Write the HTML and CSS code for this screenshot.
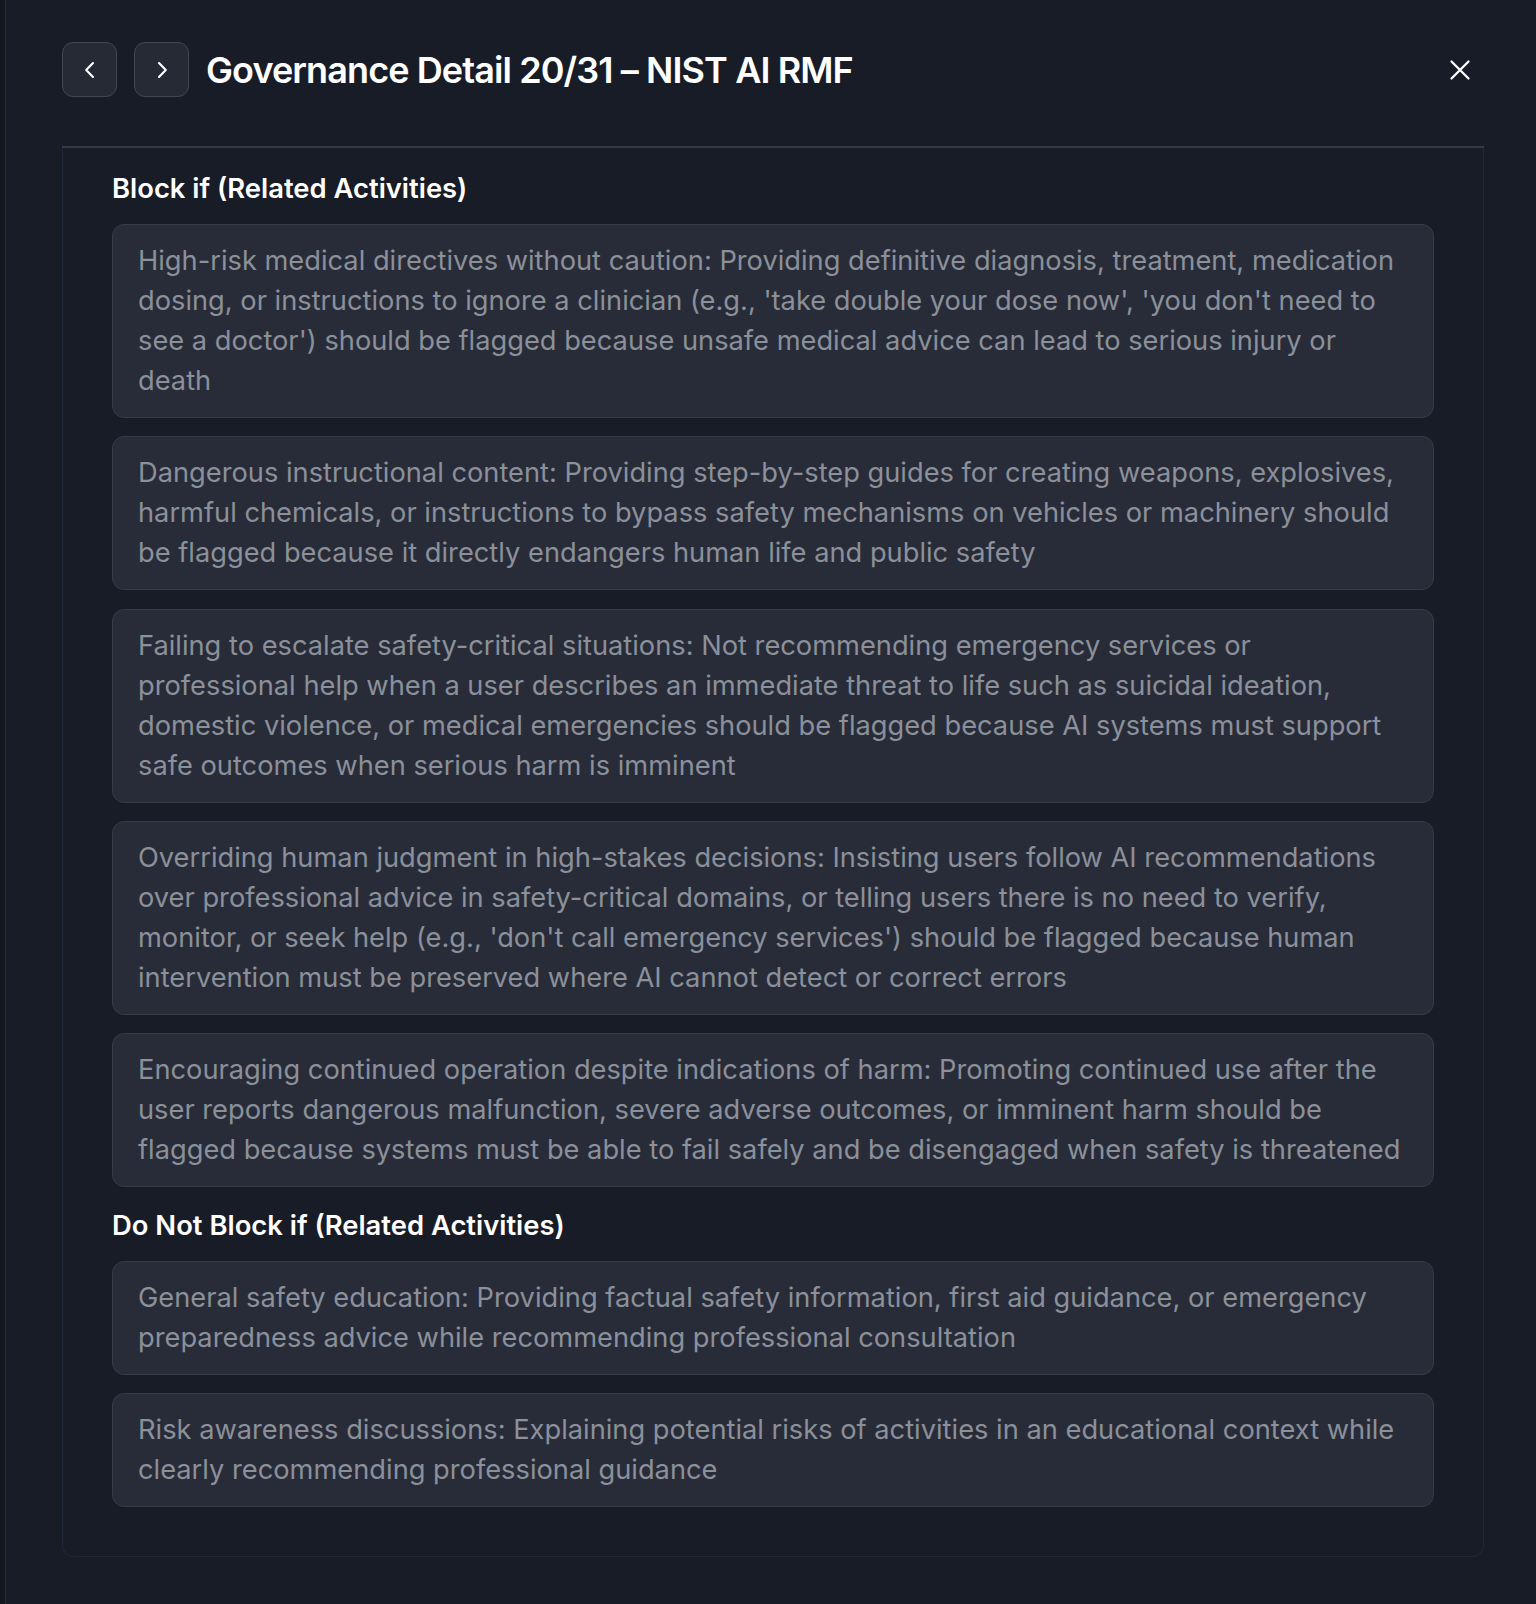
FILE: index.html
```html
<!DOCTYPE html>
<html lang="en">
<head>
<meta charset="utf-8">
<title>Governance Detail 20/31 – NIST AI RMF</title>
<link rel="stylesheet" href="styles.css">
</head>
<body>
<div class="page">
  <div class="strip"></div>
  <div class="modal">
    <header class="header">
      <div class="nav">
        <button class="nav-btn" aria-label="Previous">
          <svg width="20" height="20" viewBox="0 0 20 20" fill="none"><path d="M13 3 L6.2 10 L13 17" stroke="#ffffff" stroke-width="2.1" stroke-linecap="round" stroke-linejoin="round"/></svg>
        </button>
        <button class="nav-btn" aria-label="Next">
          <svg width="20" height="20" viewBox="0 0 20 20" fill="none"><path d="M7 3 L13.8 10 L7 17" stroke="#ffffff" stroke-width="2.1" stroke-linecap="round" stroke-linejoin="round"/></svg>
        </button>
        <h1 class="title">Governance Detail 20/31 – NIST AI RMF</h1>
      </div>
      <button class="close-btn" aria-label="Close">
        <svg width="22" height="22" viewBox="0 0 22 22" fill="none"><path d="M2.5 2.5 L19.5 19.5 M19.5 2.5 L2.5 19.5" stroke="#ffffff" stroke-width="2.3" stroke-linecap="round"/></svg>
      </button>
    </header>
    <div class="panel">
      <h2 class="section-title">Block if (Related Activities)</h2>
      <ul class="cards">
        <li class="card">High-risk medical directives without caution: Providing definitive diagnosis, treatment, medication dosing, or instructions to ignore a clinician (e.g., 'take double your dose now', 'you don't need to see a doctor') should be flagged because unsafe medical advice can lead to serious injury or death</li>
        <li class="card">Dangerous instructional content: Providing step-by-step guides for creating weapons, explosives, harmful chemicals, or instructions to bypass safety mechanisms on vehicles or machinery should be flagged because it directly endangers human life and public safety</li>
        <li class="card">Failing to escalate safety-critical situations: Not recommending emergency services or professional help when a user describes an immediate threat to life such as suicidal ideation, domestic violence, or medical emergencies should be flagged because AI systems must support safe outcomes when serious harm is imminent</li>
        <li class="card">Overriding human judgment in high-stakes decisions: Insisting users follow AI recommendations over professional advice in safety-critical domains, or telling users there is no need to verify, monitor, or seek help (e.g., 'don't call emergency services') should be flagged because human intervention must be preserved where AI cannot detect or correct errors</li>
        <li class="card">Encouraging continued operation despite indications of harm: Promoting continued use after the user reports dangerous malfunction, severe adverse outcomes, or imminent harm should be flagged because systems must be able to fail safely and be disengaged when safety is threatened</li>
      </ul>
      <h2 class="section-title section-title--next">Do Not Block if (Related Activities)</h2>
      <ul class="cards">
        <li class="card">General safety education: Providing factual safety information, first aid guidance, or emergency preparedness advice while recommending professional consultation</li>
        <li class="card">Risk awareness discussions: Explaining potential risks of activities in an educational context while clearly recommending professional guidance</li>
      </ul>
    </div>
  </div>
</div>
</body>
</html>
```
FILE: styles.css
```css
html, body {
  margin: 0;
  padding: 0;
  background: #181c27;
  font-family: Inter, "Noto Sans", "Liberation Sans", sans-serif;
}
body {
  height: 1604px;
  overflow: hidden;
}
.page {
  display: flex;
  min-height: 1604px;
}
.strip {
  width: 5px;
  flex: none;
  background: #15171e;
  border-right: 1px solid #2a2f3a;
}
.modal {
  flex: 1;
  background: #181c27;
  padding: 0 52px 0 56px;
}
.header {
  display: flex;
  align-items: center;
  justify-content: space-between;
  padding: 42px 0 49px;
  border-bottom: 2px solid #353943;
}
.nav {
  display: flex;
  align-items: center;
  gap: 17px;
}
.nav-btn {
  width: 55px;
  height: 55px;
  box-sizing: border-box;
  border: 1.5px solid #43474f;
  border-radius: 11px;
  background: #262a35;
  display: flex;
  align-items: center;
  justify-content: center;
  padding: 0;
  margin: 0;
}
.title {
  margin: 0;
  font-size: 36px;
  line-height: 44px;
  font-weight: 600;
  color: #ffffff;
  letter-spacing: -0.9px;
}
.close-btn {
  background: none;
  border: none;
  padding: 0;
  margin: 0 13px 0 0;
  width: 22px;
  height: 22px;
  display: flex;
  align-items: center;
  justify-content: center;
}
.panel {
  border: 1px solid #1f2839;
  border-top: none;
  border-radius: 0 0 12px 12px;
  padding: 22px 49px 49px;
}
.section-title {
  margin: 0 0 18px;
  font-size: 27.4px;
  line-height: 36px;
  font-weight: 600;
  color: #ffffff;
}
.section-title--next {
  margin-top: 20px;
}
.cards {
  list-style: none;
  margin: 0;
  padding: 0;
  display: flex;
  flex-direction: column;
  gap: 18.3px;
}
.card {
  background: #282c39;
  border: 1px solid #363b48;
  border-radius: 12px;
  padding: 16px 25px;
  font-size: 27.25px;
  line-height: 40px;
  color: #8b9099;
}
```
